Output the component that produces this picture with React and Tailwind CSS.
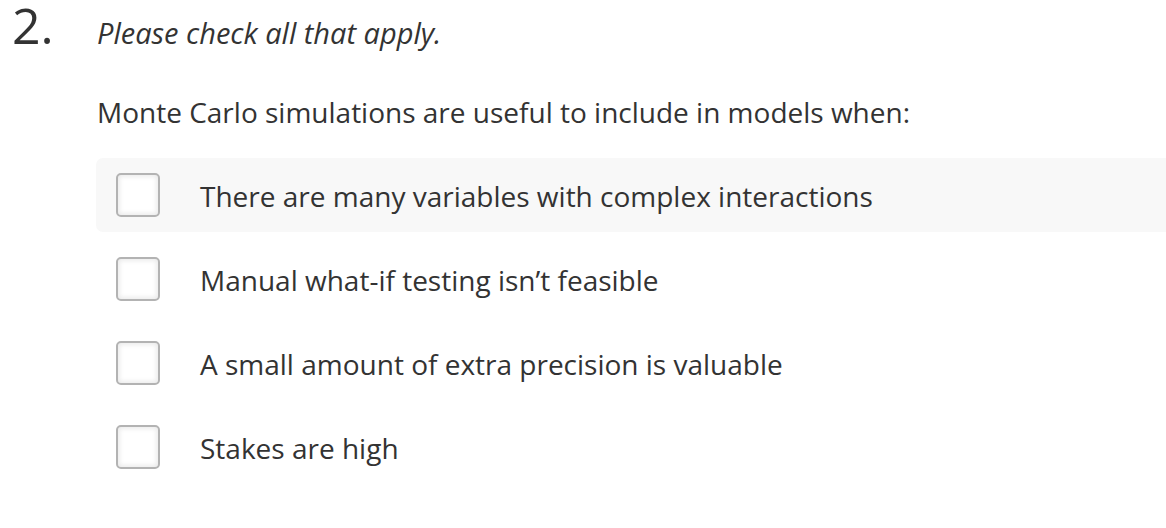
const options = [
  "There are many variables with complex interactions",
  "Manual what-if testing isn\u2019t feasible",
  "A small amount of extra precision is valuable",
  "Stakes are high",
];

function Checkbox() {
  return (
    <span className="block w-[44px] h-[44px] shrink-0 rounded-[5px] border-2 border-[#b3b3b3] bg-white shadow-[inset_0_0_4px_2px_#ececec]"></span>
  );
}

export default function App() {
  return (
    <div className="min-h-[528px] bg-white text-[#333333] font-['Open_Sans',sans-serif] overflow-hidden">
      <div className="flex items-baseline">
        <div className="w-[97px] pl-[12px] text-[50px] leading-[50px]">2.</div>
        <div className="text-[29px] italic leading-[50px]">Please check all that apply.</div>
      </div>

      <div className="pl-[97px] mt-[36px] text-[28px] leading-[36px]">
        Monte Carlo simulations are useful to include in models when:
      </div>

      <div className="ml-[96px] mt-[28px] flex flex-col gap-[10px]">
        {options.map((text, i) => (
          <label
            key={text}
            className={
              "flex items-center h-[74px] pl-[20px] gap-[40px] rounded-l-[7px] " +
              (i === 0 ? "bg-[#f8f8f8]" : "")
            }
          >
            <Checkbox />
            <span className="text-[28px] leading-[36px] mt-[2px]">{text}</span>
          </label>
        ))}
      </div>
    </div>
  );
}
